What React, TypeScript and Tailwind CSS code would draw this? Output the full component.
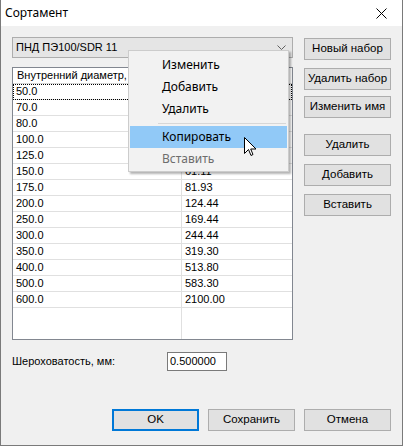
import React from 'react'

// second column values of the first rows sit under the context menu
const rows = [
  ['50.0', ''],
  ['70.0', ''],
  ['80.0', ''],
  ['100.0', ''],
  ['125.0', ''],
  ['150.0', '61.11'],
  ['175.0', '81.93'],
  ['200.0', '124.44'],
  ['250.0', '169.44'],
  ['300.0', '244.44'],
  ['350.0', '319.30'],
  ['400.0', '513.80'],
  ['500.0', '583.30'],
  ['600.0', '2100.00'],
]

const sideButtons = [
  { label: 'Новый набор', mt: 'mt-[1px]' },
  { label: 'Удалить набор', mt: 'mt-[8px]' },
  { label: 'Изменить имя', mt: 'mt-[6px]' },
  { label: 'Удалить', mt: 'mt-[16px]' },
  { label: 'Добавить', mt: 'mt-[8px]' },
  { label: 'Вставить', mt: 'mt-[8px]' },
]

const sans = "font-['Liberation_Sans',Arial,sans-serif]"
const ui = "font-['Noto_Sans',sans-serif]"

function WinButton({ label, className = '', primary = false }: { label: string; className?: string; primary?: boolean }) {
  return (
    <div
      className={`flex h-[22px] w-[87px] items-center justify-center bg-[#e1e1e1] text-[11.5px] text-black ${sans} ${
        primary ? 'border-2 border-[#0078d7]' : 'border border-[#adadad]'
      } ${className}`}
    >
      {label}
    </div>
  )
}

export default function App() {
  return (
    <div className="relative flex h-[446px] w-[403px] flex-col border-x border-b border-[#7a7a7a] bg-[#f0f0f0]">
      {/* title bar */}
      <div className={`flex h-[26px] items-center justify-between bg-white pl-[4px] pr-[15px] text-[12px] text-black ${ui}`}>
        <span>Сортамент</span>
        <svg width="11" height="11" viewBox="0 0 11 11">
          <path d="M0.5 0.5 L10.5 10.5 M10.5 0.5 L0.5 10.5" stroke="#000" strokeWidth="1" />
        </svg>
      </div>

      <div className="flex flex-col pl-[11px] pr-[11px] pt-[11px]">
        <div className="flex gap-[11px]">
          {/* left: combo + grid */}
          <div className="flex w-[281px] flex-col">
            <div className={`flex h-[21px] items-center justify-between border border-[#adadad] bg-[#e5e5e5] pl-[3px] pr-[6px] text-[11px] text-black ${sans}`}>
              <span>ПНД ПЭ100/SDR 11</span>
              <svg width="9" height="5" viewBox="0 0 9 5">
                <path d="M0.5 0.5 L4.5 4.5 L8.5 0.5" fill="none" stroke="#606060" strokeWidth="1" />
              </svg>
            </div>

            <div className={`mt-[9px] flex h-[273px] flex-col border border-[#828790] bg-white text-[11px] text-black ${sans}`}>
              <div className="flex h-[16px] border-b border-[#d5d5d5] bg-white">
                <div className="flex w-[169px] items-center overflow-hidden whitespace-nowrap border-r border-[#e5e5e5] pl-[4px]">
                  Внутренний диаметр,
                </div>
                <div className="flex-1" />
              </div>
              <div className="flex flex-1 flex-col">
                {rows.map(([d, v], i) => (
                  <div key={d} className={`flex h-[16px] border-b border-[#e0e0e0] ${i === 0 ? 'outline-1 outline-dotted outline-offset-[-1px] outline-black' : ''}`}>
                    <div className="flex w-[169px] items-center border-r border-[#e0e0e0] pl-[3px]">{d}</div>
                    <div className="flex flex-1 items-center pl-[3px]">{v}</div>
                  </div>
                ))}
                <div className="flex flex-1">
                  <div className="w-[169px] border-r border-[#e0e0e0]" />
                </div>
              </div>
            </div>
          </div>

          {/* right buttons */}
          <div className="flex flex-col">
            {sideButtons.map((b) => (
              <WinButton key={b.label} label={b.label} className={b.mt} />
            ))}
          </div>
        </div>

        <div className={`mt-[12px] flex items-center text-[11px] text-black ${sans}`}>
          <span className="w-[155px]">Шероховатость, мм:</span>
          <div className="flex h-[19px] w-[60px] items-center border border-[#7a7a7a] bg-white pl-[2px]">0.500000</div>
        </div>

        <div className="mt-[38px] flex justify-end gap-[9px]">
          <WinButton label="OK" primary />
          <WinButton label="Сохранить" />
          <WinButton label="Отмена" />
        </div>
      </div>

      {/* context menu */}
      <div className={`absolute left-[127px] top-[50px] flex h-[122px] w-[161px] flex-col border border-[#cccccc] bg-[#f2f2f2] pt-[3px] text-[12px] text-black shadow-[2px_2px_2px_rgba(0,0,0,0.3)] ${ui}`}>
        <div className="flex h-[22px] items-center pl-[33px]">Изменить</div>
        <div className="flex h-[22px] items-center pl-[33px]">Добавить</div>
        <div className="flex h-[22px] items-center pl-[33px]">Удалить</div>
        <div className="flex h-[6px] items-center pl-[29px] pr-[2px]">
          <div className="h-px w-full bg-[#d7d7d7]" />
        </div>
        <div className="mx-[1px] flex h-[22px] items-center bg-[#91c9f7] pl-[32px]">Копировать</div>
        <div className="flex h-[22px] items-center pl-[33px] text-[#6d6d6d]">Вставить</div>
      </div>

      {/* mouse cursor */}
      <svg className="absolute left-[243px] top-[137px]" width="13" height="21" viewBox="0 0 13 21">
        <path
          d="M0.5 0.5 L0.5 16.5 L4.5 12.5 L7 18.5 L9 17.5 L6.7 12 L12 12 Z"
          fill="#fff"
          stroke="#000"
          strokeWidth="1"
          strokeLinejoin="miter"
        />
      </svg>
    </div>
  )
}
